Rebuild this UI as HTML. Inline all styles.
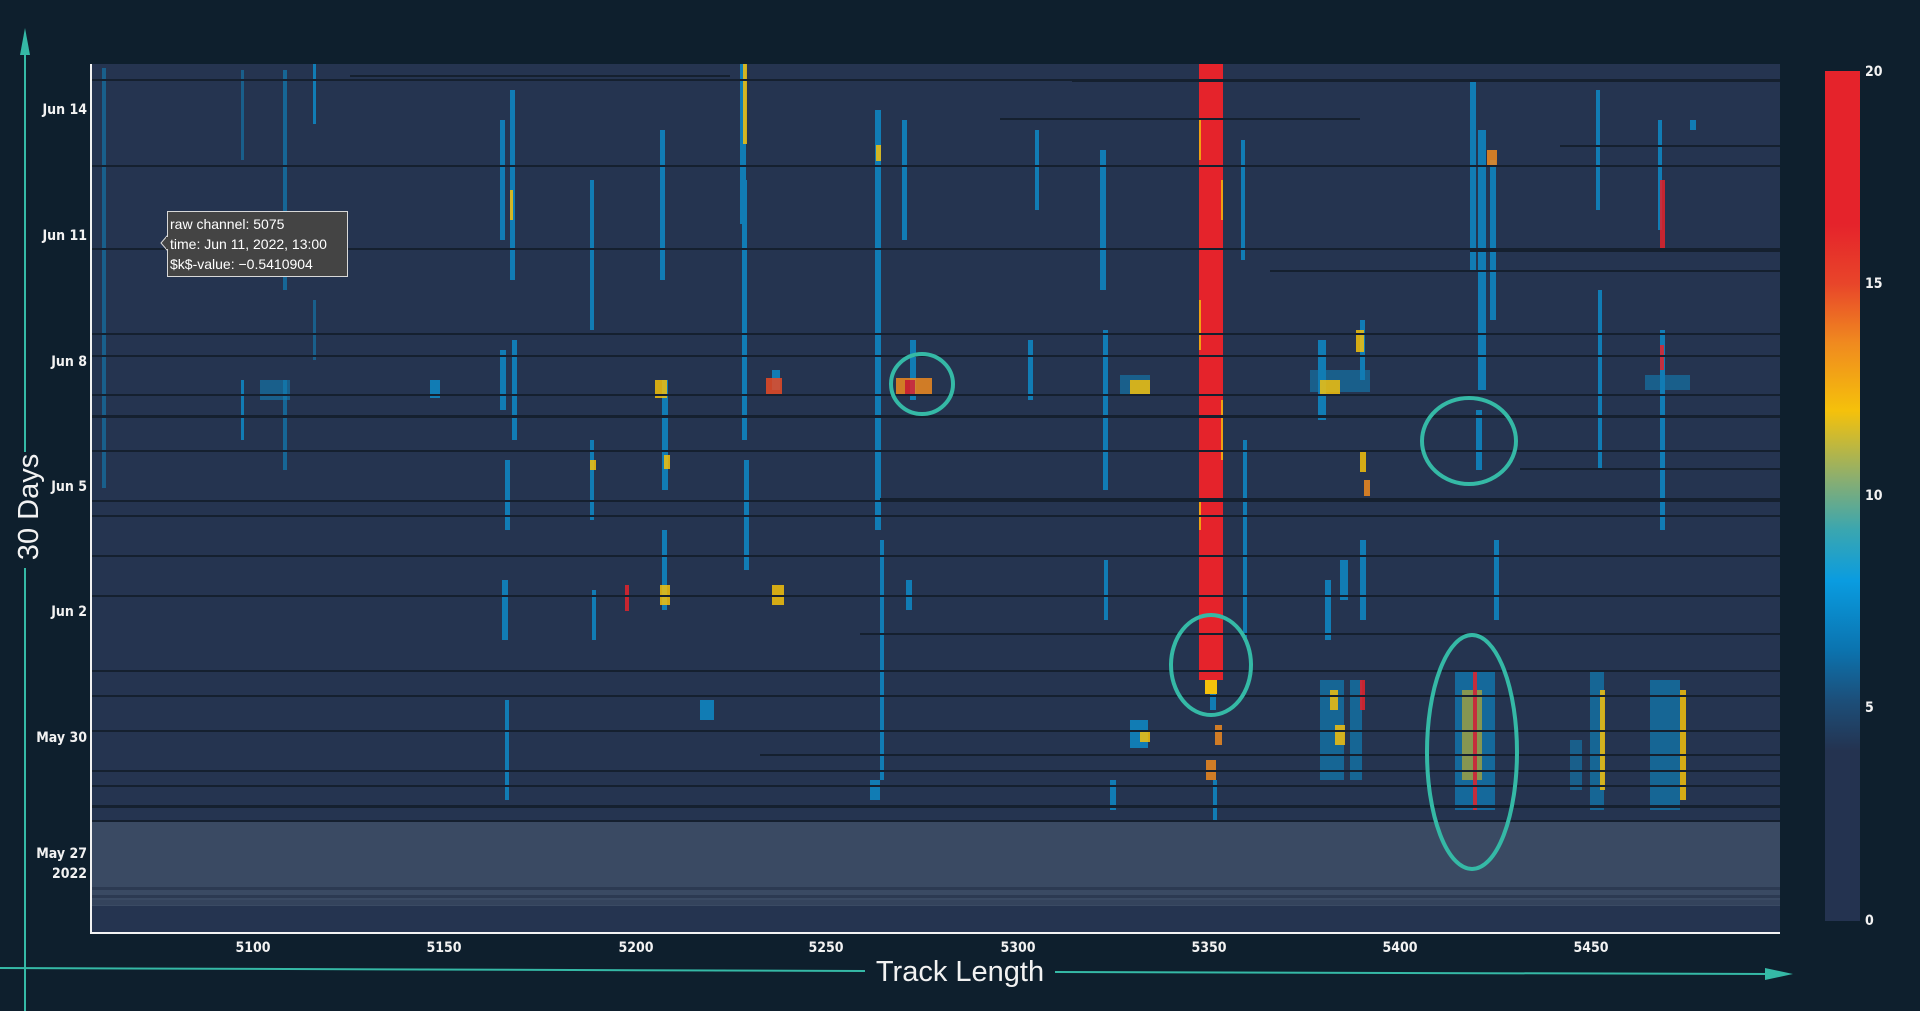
<!DOCTYPE html>
<html><head><meta charset="utf-8"><style>
html,body{margin:0;padding:0;background:#0e1f2d;width:1920px;height:1011px;overflow:hidden;font-family:"Liberation Sans",sans-serif}
svg{position:absolute;left:0;top:0}
.tk{font-family:"DejaVu Sans Condensed","DejaVu Sans",sans-serif;font-size:14px;font-weight:bold;fill:#f2f2f2}
</style></head><body>
<svg width="1920" height="1011" viewBox="0 0 1920 1011">
<defs>
<linearGradient id="cb" x1="0" y1="1" x2="0" y2="0">
<stop offset="0" stop-color="#243350"/>
<stop offset="0.2" stop-color="#243350"/>
<stop offset="0.26" stop-color="#1c4f7a"/>
<stop offset="0.32" stop-color="#0b74b0"/>
<stop offset="0.4" stop-color="#0a9ce0"/>
<stop offset="0.46" stop-color="#3aa6b0"/>
<stop offset="0.52" stop-color="#8aae70"/>
<stop offset="0.6" stop-color="#f5c10b"/>
<stop offset="0.68" stop-color="#f08a1f"/>
<stop offset="0.75" stop-color="#e8452a"/>
<stop offset="0.82" stop-color="#e5232b"/>
<stop offset="1" stop-color="#e5232b"/>
</linearGradient>
</defs>

<rect x="91" y="64" width="1689" height="869" fill="#253450"/>
<rect x="91" y="820" width="1689" height="86" fill="#3a4a63"/>
<rect x="91" y="887" width="1689" height="3" fill="#2c3a52"/>
<rect x="91" y="895" width="1689" height="3" fill="#2c3a52"/>
<rect x="91" y="900" width="1689" height="5" fill="#34435c"/>

<g fill="#0a9ce0" opacity="0.7">
<rect x="102" y="68" width="4" height="420" opacity="0.6"/>
<rect x="241" y="70" width="3" height="90" opacity="0.6"/><rect x="241" y="380" width="3" height="60"/>
<rect x="283" y="70" width="4" height="220" opacity="0.7"/><rect x="283" y="380" width="4" height="90" opacity="0.7"/>
<rect x="313" y="64" width="3" height="60"/><rect x="313" y="300" width="3" height="60" opacity="0.6"/>
<rect x="500" y="120" width="5" height="120"/><rect x="510" y="90" width="5" height="190"/>
<rect x="500" y="350" width="6" height="60"/><rect x="512" y="340" width="5" height="100"/>
<rect x="505" y="460" width="5" height="70"/><rect x="502" y="580" width="6" height="60"/>
<rect x="505" y="700" width="4" height="100"/>
<rect x="590" y="180" width="4" height="150"/><rect x="590" y="440" width="4" height="80"/>
<rect x="592" y="590" width="4" height="50"/>
<rect x="660" y="130" width="5" height="150"/><rect x="662" y="380" width="6" height="110"/><rect x="662" y="530" width="5" height="80"/>
<rect x="740" y="64" width="6" height="160"/><rect x="742" y="180" width="5" height="260"/><rect x="744" y="460" width="5" height="110"/>
<rect x="772" y="370" width="8" height="20"/>
<rect x="875" y="110" width="6" height="420"/><rect x="880" y="540" width="4" height="240"/>
<rect x="902" y="120" width="5" height="120"/><rect x="910" y="340" width="6" height="60"/><rect x="906" y="580" width="6" height="30"/>
<rect x="1028" y="340" width="5" height="60"/><rect x="1035" y="130" width="4" height="80"/>
<rect x="1100" y="150" width="6" height="140"/><rect x="1103" y="330" width="5" height="160"/><rect x="1104" y="560" width="4" height="60"/>
<rect x="1241" y="140" width="4" height="120"/><rect x="1243" y="440" width="4" height="200"/>
<rect x="1318" y="340" width="8" height="80"/><rect x="1325" y="580" width="6" height="60"/><rect x="1340" y="560" width="8" height="40"/>
<rect x="1360" y="320" width="5" height="60"/><rect x="1360" y="540" width="6" height="80"/>
<rect x="1470" y="80" width="6" height="190"/><rect x="1478" y="130" width="8" height="260"/><rect x="1476" y="410" width="6" height="60"/>
<rect x="1490" y="160" width="6" height="160"/><rect x="1494" y="540" width="5" height="80"/>
<rect x="1596" y="90" width="4" height="120"/><rect x="1598" y="290" width="4" height="180"/>
<rect x="1658" y="120" width="4" height="110"/><rect x="1660" y="330" width="5" height="200"/>
<rect x="1690" y="120" width="6" height="10"/>
<rect x="1320" y="680" width="24" height="100" opacity="0.7"/><rect x="1350" y="680" width="12" height="100" opacity="0.7"/>
<rect x="1455" y="670" width="40" height="140" opacity="0.75"/>
<rect x="1590" y="670" width="14" height="140" opacity="0.7"/><rect x="1570" y="740" width="12" height="50" opacity="0.6"/>
<rect x="1650" y="680" width="30" height="130" opacity="0.7"/>
<rect x="1130" y="720" width="18" height="28"/><rect x="1110" y="780" width="6" height="30"/>
<rect x="700" y="700" width="14" height="20"/><rect x="870" y="780" width="10" height="20"/>
<rect x="260" y="380" width="30" height="20" opacity="0.6"/><rect x="1120" y="375" width="30" height="20" opacity="0.6"/>
<rect x="1310" y="370" width="60" height="22" opacity="0.6"/><rect x="1645" y="375" width="45" height="15" opacity="0.6"/>
<rect x="430" y="380" width="10" height="18"/>
<rect x="1210" y="690" width="6" height="20"/><rect x="1213" y="780" width="4" height="40"/>
</g>
<g opacity="0.85">
<rect x="743" y="64" width="4" height="80" fill="#f5c10b"/>
<rect x="510" y="190" width="3" height="30" fill="#f5c10b"/>
<rect x="876" y="145" width="5" height="16" fill="#f5c10b"/>
<rect x="655" y="380" width="12" height="18" fill="#f5c10b"/>
<rect x="766" y="378" width="16" height="18" fill="#e94a24"/>
<rect x="896" y="378" width="36" height="18" fill="#f08a1f"/><rect x="905" y="380" width="10" height="14" fill="#e5232b"/>
<rect x="1130" y="380" width="20" height="16" fill="#f5c10b"/>
<rect x="1320" y="380" width="20" height="14" fill="#f5c10b"/><rect x="1356" y="330" width="8" height="22" fill="#f5c10b"/>
<rect x="1360" y="450" width="6" height="22" fill="#f5c10b"/><rect x="1364" y="480" width="6" height="16" fill="#f08a1f"/>
<rect x="590" y="460" width="6" height="10" fill="#f5c10b"/><rect x="664" y="455" width="6" height="14" fill="#f5c10b"/>
<rect x="625" y="585" width="4" height="26" fill="#e5232b"/><rect x="660" y="585" width="10" height="20" fill="#f5c10b"/>
<rect x="772" y="585" width="12" height="20" fill="#f5c10b"/>
<rect x="1140" y="730" width="10" height="12" fill="#f5c10b"/>
<rect x="1215" y="725" width="7" height="20" fill="#f08a1f"/>
<rect x="1330" y="690" width="8" height="20" fill="#f5c10b"/><rect x="1360" y="680" width="5" height="30" fill="#e5232b"/>
<rect x="1335" y="725" width="10" height="20" fill="#f5c10b"/>
<rect x="1462" y="690" width="20" height="90" fill="#f5c10b" opacity="0.6"/><rect x="1473" y="670" width="4" height="140" fill="#e5232b"/>
<rect x="1600" y="690" width="5" height="100" fill="#f5c10b"/><rect x="1680" y="690" width="6" height="110" fill="#f5c10b"/>
<rect x="1660" y="180" width="5" height="70" fill="#e5232b"/><rect x="1660" y="345" width="4" height="25" fill="#e5232b"/>
<rect x="1487" y="150" width="10" height="16" fill="#f08a1f"/>
<rect x="1206" y="760" width="10" height="20" fill="#f08a1f"/>
</g>
<rect x="1199" y="64" width="24" height="616" fill="#e5232b"/>
<rect x="1205" y="680" width="12" height="14" fill="#f5c10b"/>
<g fill="#f5c10b" opacity="0.8">
<rect x="1199" y="120" width="2" height="40"/><rect x="1221" y="180" width="2" height="40"/><rect x="1199" y="300" width="2" height="50"/><rect x="1221" y="400" width="2" height="60"/><rect x="1199" y="500" width="2" height="30"/>
</g>

<g fill="#15202f">
<rect x="91" y="79" width="1689" height="2"/>
<rect x="350" y="75" width="380" height="2"/>
<rect x="1072" y="80" width="708" height="2"/>
<rect x="1000" y="118" width="360" height="2"/>
<rect x="91" y="165" width="1689" height="2"/>
<rect x="1560" y="145" width="220" height="2"/>
<rect x="91" y="248" width="1689" height="2"/>
<rect x="1470" y="250" width="310" height="2"/>
<rect x="1270" y="270" width="510" height="2"/>
<rect x="91" y="333" width="1689" height="2"/>
<rect x="91" y="355" width="1689" height="2"/>
<rect x="91" y="394" width="1689" height="2"/>
<rect x="91" y="415" width="1689" height="3"/>
<rect x="91" y="450" width="1689" height="2"/>
<rect x="1520" y="468" width="260" height="2"/>
<rect x="91" y="500" width="1689" height="2"/>
<rect x="880" y="498" width="900" height="3"/>
<rect x="91" y="515" width="1689" height="2"/>
<rect x="91" y="555" width="1689" height="2"/>
<rect x="91" y="595" width="1689" height="2"/>
<rect x="860" y="633" width="920" height="2"/>
<rect x="91" y="670" width="1689" height="2"/>
<rect x="91" y="695" width="1689" height="2"/>
<rect x="91" y="730" width="1689" height="2"/>
<rect x="760" y="754" width="1020" height="2"/>
<rect x="91" y="770" width="1689" height="2"/>
<rect x="91" y="785" width="1689" height="2"/>
<rect x="91" y="805" width="1689" height="3"/>
<rect x="91" y="820" width="1689" height="2"/>
</g>

<rect x="90" y="64" width="2" height="870" fill="#f2f2f2"/>
<rect x="90" y="932" width="1690" height="2" fill="#f2f2f2"/>

<g class="tk" text-anchor="end">
<text x="87" y="114">Jun 14</text>
<text x="87" y="240">Jun 11</text>
<text x="87" y="366">Jun 8</text>
<text x="87" y="491">Jun 5</text>
<text x="87" y="616">Jun 2</text>
<text x="87" y="742">May 30</text>
<text x="87" y="858">May 27</text>
<text x="87" y="878">2022</text>
</g>
<g class="tk" text-anchor="middle">
<text x="253" y="952">5100</text><text x="444" y="952">5150</text><text x="636" y="952">5200</text>
<text x="826" y="952">5250</text><text x="1018" y="952">5300</text><text x="1209" y="952">5350</text>
<text x="1400" y="952">5400</text><text x="1591" y="952">5450</text>
</g>

<rect x="1825" y="71" width="35" height="850" fill="url(#cb)"/>
<g class="tk">
<text x="1865" y="76">20</text><text x="1865" y="288">15</text><text x="1865" y="500">10</text><text x="1865" y="712">5</text><text x="1865" y="925">0</text>
</g>

<g fill="none" stroke="#35b9a6" stroke-width="4">
<ellipse cx="922" cy="384" rx="31" ry="30"/>
<ellipse cx="1469" cy="441" rx="47" ry="43"/>
<ellipse cx="1211" cy="665" rx="40" ry="50"/>
<ellipse cx="1472" cy="752" rx="45" ry="117"/>
</g>

<g stroke="#35b9a6" stroke-width="2" fill="none">
<line x1="25" y1="45" x2="25" y2="452"/>
<line x1="25" y1="568" x2="25" y2="1011"/>
<line x1="0" y1="968" x2="865" y2="971"/>
<line x1="1055" y1="972" x2="1770" y2="974"/>
</g>
<polygon points="25,28 20,55 30,55" fill="#35b9a6"/>
<polygon points="1793,974 1765,968 1765,980" fill="#35b9a6"/>
<text x="960" y="981" text-anchor="middle" font-family="Liberation Sans, sans-serif" font-size="29" fill="#f2f2f2">Track Length</text>
<text transform="translate(38,507) rotate(-90)" text-anchor="middle" font-family="Liberation Sans, sans-serif" font-size="29" fill="#f2f2f2">30 Days</text>

<polygon points="167,236 161,243 167,250" fill="#444" stroke="#d8d8d8" stroke-width="1"/>
<rect x="167.5" y="211.5" width="180" height="65" fill="#444" stroke="#d8d8d8" stroke-width="1"/>
<rect x="166" y="237" width="3" height="12" fill="#444"/>
<g font-family="Liberation Sans, sans-serif" font-size="14" fill="#fff">
<text x="170" y="229">raw channel: 5075</text>
<text x="170" y="249">time: Jun 11, 2022, 13:00</text>
<text x="170" y="269">$k$-value: −0.5410904</text>
</g>
</svg>
</body></html>
